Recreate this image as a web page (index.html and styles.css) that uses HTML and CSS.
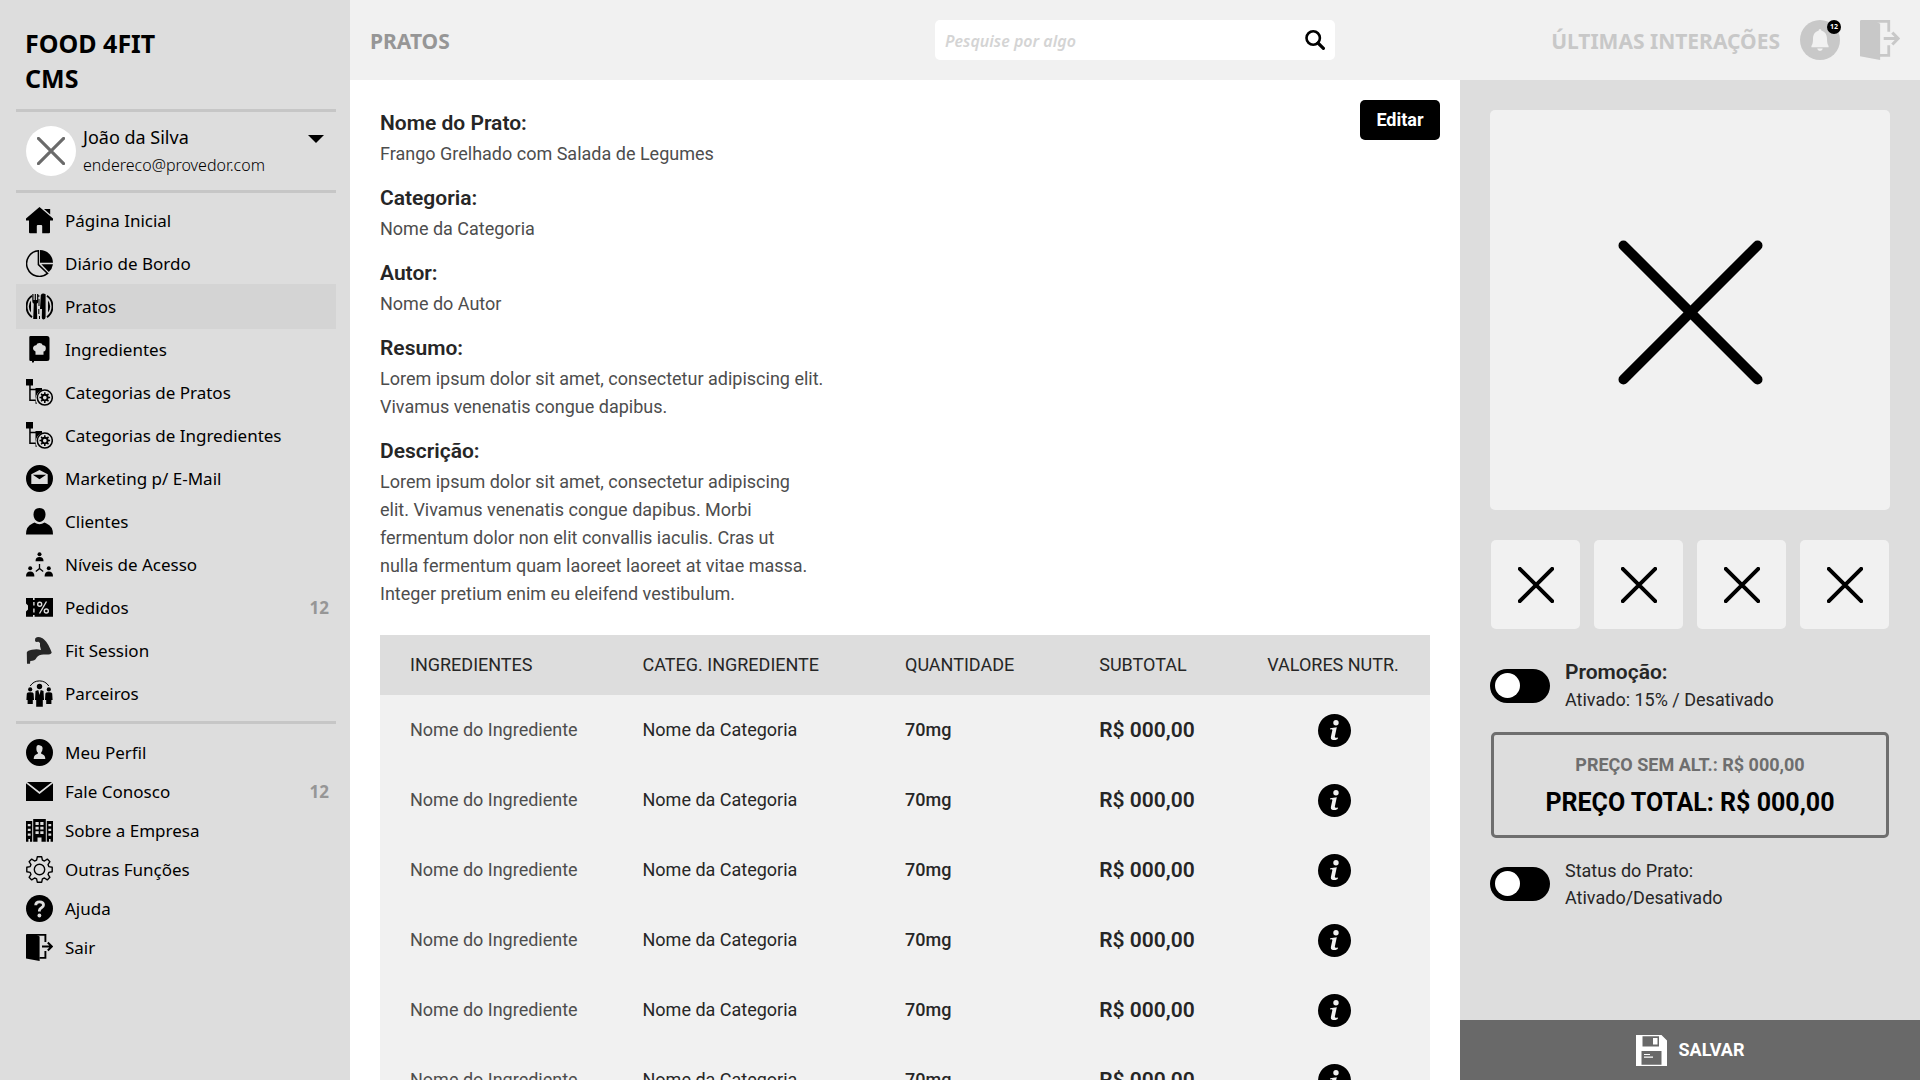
FILE: index.html
```html
<!DOCTYPE html>
<html lang="pt-BR">
<head>
<meta charset="utf-8">
<meta name="viewport" content="width=device-width, initial-scale=1">
<title>Food 4Fit CMS - Pratos</title>
<link rel="stylesheet" href="styles.css">
</head>
<body>
<svg class="sprite" aria-hidden="true">
  <symbol id="home" viewBox="0 0 27 27"><path d="M13.5 0 27 11.6V13.6H24V25.2Q24 26.2 23 26.2H16.2V19Q16.2 18 15.2 18H11.8Q10.8 18 10.8 19V26.2H4Q3 26.2 3 25.2V13.6H0V11.6Z"/><path d="M18 2H24.2V7.4Z"/></symbol>
  <symbol id="pie" viewBox="0 0 27 27"><path d="M14 0A13 13 0 0 1 27 12.8H14Z"/><path d="M15.400 14.200H27A13 13 0 0 1 22.800 22Z"/><path d="M12.400.8A12.800 12.800 0 1 0 21.600 23.400L12.400 14.600Z" fill="none" stroke="currentColor" stroke-width="1.500"/></symbol>
  <symbol id="plate" viewBox="0 0 27 27"><path d="M6 2.8A13.2 13.2 0 0 0 6 24.2M21 2.8A13.2 13.2 0 0 1 21 24.2" fill="none" stroke="currentColor" stroke-width="1.8"/><path d="M5 7.5A9.4 9.4 0 0 0 5 19.5ZM22 7.5A9.4 9.4 0 0 1 22 19.5Z"/><path d="M6.3 1H7.5V7H8.7V1H9.9V7H11.1V1H12.3V8.2Q12.3 10 10.8 10.8L11.2 26H7.2L7.8 10.8Q6.3 10 6.3 8.2ZM14.8 2Q16.500-.5 19.6 1.2V24Q19.6 26.4 17.6 26.4T15.8 24L16 16H14Z"/><path d="M12.8 2V4M13 6V13M12.8 16V21M13.5 23V26" stroke="currentColor" stroke-width="1"/></symbol>
  <symbol id="book" viewBox="0 0 27 27"><path fill-rule="evenodd" d="M4.500 0H21Q23.500 0 23.500 2.500V22.500Q23.500 25 21 25H8V26.800L7 26 6 27V25H4.500Q3.300 25 3.300 23.800V1.200Q3.300 0 4.500 0ZM9.500 18.800H17.500V15.600Q20 15 19.800 12T16.800 9.200Q16 7 13.500 7T10.200 9.200Q7 9.600 7 12.300T9.500 15.600Z"/></symbol>
  <symbol id="tree" viewBox="0 0 27 27"><path d="M0 0H7V6.600H0ZM9.500 9H16V11A9.600 9.600 0 0 0 11 24.800H9.500V22H3.200V6H4.700V9.800H9.500V11.300H4.700V20.500H9.500Z"/><circle cx="18.800" cy="18.600" r="7.500" fill="none" stroke="currentColor" stroke-width="1.500"/><circle cx="18.800" cy="18.600" r="2.800" fill="none" stroke="currentColor" stroke-width="1.900"/><path d="M18.800 13.300V16M18.800 21.200V23.900M13.500 18.600H16M21.600 18.600H24.100M15.100 14.900 17 16.800M20.600 20.400 22.500 22.300M15.100 22.300 17 20.400M20.600 16.800 22.500 14.900" stroke="currentColor" stroke-width="1.500"/></symbol>
  <symbol id="mail-circle" viewBox="0 0 27 27"><path fill-rule="evenodd" d="M13.500 0A13.500 13.500 0 1 1 13.500 27A13.500 13.500 0 1 1 13.500 0ZM5.300 9.200V18.900H21.700V9.200L13.500 5ZM6.800 9.800H20.200L13.500 14.200Z"/></symbol>
  <symbol id="user" viewBox="0 0 27 27"><path d="M13.500 0C17.500 0 19.500 2.800 19.500 6.500S17 14 13.500 14 7.500 10.200 7.500 6.500 9.500 0 13.500 0Z"/><path d="M0 26.400Q0 18 6.500 15.400L8.500 14.600Q13.500 18 18.500 14.600L20.500 15.400Q27 18 27 26.400Z"/></symbol>
  <symbol id="levels" viewBox="0 0 27 27"><circle cx="13.500" cy="3.200" r="2"/><path d="M9.500 10.200Q9.500 6 13.500 6T17.500 10.200Z"/><circle cx="4.200" cy="17.300" r="2"/><path d="M0 25.400Q0 20.500 4.200 20.500T8.400 25.400Z"/><circle cx="22.800" cy="17.300" r="2"/><path d="M18.600 25.400Q18.600 20.500 22.800 20.500T27 25.400Z"/><path d="M13.500 13V17.600L9.800 20.400M13.500 17.600 17.200 20.400" fill="none" stroke="currentColor" stroke-width="1.300"/></symbol>
  <symbol id="ticket" viewBox="0 0 27 27"><path fill-rule="evenodd" d="M0 4H7V6H8.600V4H27V22.800H8.600V21H7V22.800H0V17.500L2 15.500V11.500L0 9.500ZM7.200 8V11.500H8.600V8ZM7.200 14.500V18.500H8.600V14.500Z"/><g fill="none" stroke="#ddd" stroke-width="1.400"><circle cx="13.700" cy="10.200" r="2"/><circle cx="20.300" cy="17" r="2"/><path d="M20.500 7.500 13.500 19.500"/></g></symbol>
  <symbol id="arm" viewBox="0 0 27 27"><path fill="#262626" d="M9.200 1.500Q10 0 12 0T16.500 1.200C20 3.500 23 8 25.700 15.400Q25 18 18 17.500Q13 17.300 10.500 20.800Q9 24 4.300 24L4 26.800H1L.8 15.500Q1.500 13.500 6 12.800Q11 11.500 15 13Q13.500 9 14 6L12.500 4.800 9.800 5Q8.500 3.500 9.200 1.500Z"/></symbol>
  <symbol id="partners" viewBox="0 0 27 27"><path d="M4.200 6Q7.500 .9 13.500 .9T22.800 6" fill="none" stroke="currentColor" stroke-width="1"/><circle cx="13.500" cy="6.500" r="2.700"/><circle cx="4.200" cy="9.400" r="2.100"/><circle cx="22.800" cy="9.400" r="2.100"/><path fill-rule="evenodd" d="M9.500 11 12.300 10 13.500 15 14.700 10 17.500 11 18 20H16.800V26.800H10.200V20H9ZM.8 13.500Q1 12.300 4.200 12.300T7.600 13.500L8 20H6.800V24H1.600V20H.4ZM19.400 13.500Q19.600 12.300 22.800 12.300T26.200 13.500L26.600 20H25.400V24H20.200V20H19Z"/></symbol>
  <symbol id="profile" viewBox="0 0 27 27"><path fill-rule="evenodd" d="M13.500 0A13.500 13.500 0 1 1 13.500 27A13.500 13.500 0 1 1 13.500 0ZM7.700 19.900H19.300Q19.300 15.800 15.200 14.800V13.300Q16.600 11.800 16.600 9.300T13.500 6.200 10.400 9.300 11.800 13.300V14.800Q7.700 15.800 7.700 19.900Z"/></symbol>
  <symbol id="envelope" viewBox="0 0 27 27"><path d="M1 4H26L13.500 13.800ZM0 5.200 13.500 16 27 5.200V23H0Z"/></symbol>
  <symbol id="company" viewBox="0 0 27 27"><path fill-rule="evenodd" d="M0 4H6.200V24.800H4V22H2.400V24.800H0ZM1.800 7V9.200H4.600V7ZM1.800 11.800V14H4.600V11.800ZM1.800 16.500V18.700H4.600V16.500ZM7.200 2H19.800V24.800H15.500V20.500H11.500V24.800H7.200ZM9.500 5V8H12.700V5ZM14.300 5V8H17.500V5ZM9.500 9.800V12.500H12.700V9.800ZM14.300 9.800V12.500H17.500V9.800ZM9.500 14.300V17H12.700V14.300ZM14.300 14.300V17H17.500V14.300ZM20.800 4H27V24.800H24.600V22H23V24.800H20.800ZM22.400 7V9.200H25.200V7ZM22.400 11.800V14H25.200V11.800ZM22.400 16.500V18.700H25.200V16.500Z"/></symbol>
  <symbol id="gear" viewBox="0 0 27 27"><g fill="none" stroke="currentColor" stroke-width="1.400"><circle cx="13.500" cy="13.500" r="5.200"/><path stroke-linejoin="round" d="M11.300.8H15.700L16.400 4.200 18.400 5 21.300 3.100 23.900 5.700 22 8.600 22.800 10.600 26.200 11.300V15.700L22.800 16.400 22 18.400 23.900 21.300 21.300 23.900 18.400 22 16.400 22.800 15.700 26.200H11.300L10.600 22.800 8.600 22 5.700 23.900 3.100 21.300 5 18.400 4.200 16.400.8 15.700V11.300L4.200 10.600 5 8.600 3.100 5.700 5.700 3.100 8.600 5 10.600 4.200Z"/></g></symbol>
  <symbol id="help" viewBox="0 0 27 27"><circle cx="13.500" cy="13.500" r="13.500"/><path d="M9.700 10.200Q9.700 6.800 13.600 6.800T17.500 10Q17.500 11.700 15.500 12.800T13.400 15.300V16.600" fill="none" stroke="#ddd" stroke-width="2.800"/><circle cx="13.400" cy="20.500" r="1.900" fill="#ddd"/></symbol>
  <symbol id="exit" viewBox="0 0 27 27"><path d="M.5 0H8.500L13.600 2.500V27L0 24.500V.5Z"/><path d="M8 .9H19.400V8M19.400 17V23.900H13.500" fill="none" stroke="currentColor" stroke-width="1.900"/><path d="M16 12.500H25.500M21.800 8.500 25.800 12.500 21.800 16.500" fill="none" stroke="currentColor" stroke-width="2"/></symbol>
  <symbol id="cross" viewBox="0 0 36 36"><path d="M1.800 1.800 34.200 34.200M34.200 1.800 1.800 34.200" fill="none" stroke="currentColor" stroke-linecap="round"/></symbol>
  <symbol id="search" viewBox="0 0 20 20"><circle cx="8.200" cy="8" r="6.700" fill="none" stroke="currentColor" stroke-width="2.600"/><path d="M13 13 18.400 18.300" stroke="currentColor" stroke-width="3.200" stroke-linecap="round"/></symbol>
  <symbol id="bell" viewBox="0 0 40 40"><circle cx="20" cy="20" r="20"/><path fill="#f1f1f1" d="M20 9Q21.300 9 21.500 10.800C25.500 12 27 15 27 19Q27 24 28.600 26V27.200H11.400V26Q13 24 13 19C13 15 14.500 12 18.500 10.800Q18.700 9 20 9ZM17.200 28.600H22.800Q22.500 31 20 31T17.200 28.600Z"/></symbol>
  <symbol id="info" viewBox="0 0 33 33"><circle cx="16.500" cy="16.500" r="16.500"/><circle cx="18" cy="8.700" r="2.700" fill="#f1f1f1"/><path fill="#f1f1f1" d="M12.200 14.200 18.800 13.200 16.800 22.800Q16.700 24.500 20 23.500L19.700 24.900Q17 26.400 14.800 26Q12.300 25.500 13 22.500L14.400 16Q14.300 15 12 15.400Z"/></symbol>
  <symbol id="disk" viewBox="0 0 31 31"><path fill-rule="evenodd" d="M0 0H25.500L31 5.500V31H0ZM6.500 1.200V11.500H23V1.200ZM5.500 16V29.800H25.500V16Z"/><path d="M17 3H21.500V9.500H17ZM8 19H14V20H8ZM8 21.500H17V22.800H8Z"/></symbol>
</svg>
<div class="app">
  <aside class="sidebar">
    <h1 class="brand">FOOD 4FIT<br>CMS</h1>
    <hr class="rule">
    <div class="account">
      <span class="avatar"><svg class="avatar-mark"><use href="#cross"/></svg></span>
      <div class="account-text">
        <p class="account-name">João da Silva</p>
        <p class="account-mail">endereco@provedor.com</p>
      </div>
      <button class="caret" type="button" aria-label="Abrir menu da conta"><svg viewBox="0 0 16 8"><path d="M0 0H16L8 8Z"/></svg></button>
    </div>
    <hr class="rule">
    <nav>
      <ul class="menu">
        <li><a class="item" href="#"><svg class="icon"><use href="#home"/></svg>Página Inicial</a></li>
        <li><a class="item" href="#"><svg class="icon"><use href="#pie"/></svg>Diário de Bordo</a></li>
        <li><a class="item item-active" href="#" aria-current="page"><svg class="icon"><use href="#plate"/></svg>Pratos</a></li>
        <li><a class="item" href="#"><svg class="icon"><use href="#book"/></svg>Ingredientes</a></li>
        <li><a class="item" href="#"><svg class="icon"><use href="#tree"/></svg>Categorias de Pratos</a></li>
        <li><a class="item" href="#"><svg class="icon"><use href="#tree"/></svg>Categorias de Ingredientes</a></li>
        <li><a class="item" href="#"><svg class="icon"><use href="#mail-circle"/></svg>Marketing p/ E-Mail</a></li>
        <li><a class="item" href="#"><svg class="icon"><use href="#user"/></svg>Clientes</a></li>
        <li><a class="item" href="#"><svg class="icon"><use href="#levels"/></svg>Níveis de Acesso</a></li>
        <li><a class="item" href="#"><svg class="icon"><use href="#ticket"/></svg>Pedidos<span class="count">12</span></a></li>
        <li><a class="item" href="#"><svg class="icon"><use href="#arm"/></svg>Fit Session</a></li>
        <li><a class="item" href="#"><svg class="icon"><use href="#partners"/></svg>Parceiros</a></li>
      </ul>
      <hr class="rule">
      <ul class="menu menu-compact">
        <li><a class="item" href="#"><svg class="icon"><use href="#profile"/></svg>Meu Perfil</a></li>
        <li><a class="item" href="#"><svg class="icon"><use href="#envelope"/></svg>Fale Conosco<span class="count">12</span></a></li>
        <li><a class="item" href="#"><svg class="icon"><use href="#company"/></svg>Sobre a Empresa</a></li>
        <li><a class="item" href="#"><svg class="icon"><use href="#gear"/></svg>Outras Funções</a></li>
        <li><a class="item" href="#"><svg class="icon"><use href="#help"/></svg>Ajuda</a></li>
        <li><a class="item" href="#"><svg class="icon"><use href="#exit"/></svg>Sair</a></li>
      </ul>
    </nav>
  </aside>

  <header class="topbar">
    <h2 class="page-title">PRATOS</h2>
    <form class="search" role="search">
      <input class="search-input" type="search" placeholder="Pesquise por algo" aria-label="Pesquisar">
      <button class="search-button" type="button" aria-label="Buscar"><svg><use href="#search"/></svg></button>
    </form>
    <div class="actions">
      <span class="actions-title">ÚLTIMAS INTERAÇÕES</span>
      <button class="action" type="button" aria-label="Notificações"><svg><use href="#bell"/></svg><span class="badge">12</span></button>
      <button class="action" type="button" aria-label="Sair"><svg><use href="#exit"/></svg></button>
    </div>
  </header>

  <main class="content">
    <div class="details">
      <dl class="fields">
        <div class="field"><dt>Nome do Prato:</dt><dd>Frango Grelhado com Salada de Legumes</dd></div>
        <div class="field"><dt>Categoria:</dt><dd>Nome da Categoria</dd></div>
        <div class="field"><dt>Autor:</dt><dd>Nome do Autor</dd></div>
        <div class="field"><dt>Resumo:</dt><dd>Lorem ipsum dolor sit amet, consectetur adipiscing elit. Vivamus venenatis congue dapibus.</dd></div>
        <div class="field field-narrow"><dt>Descrição:</dt><dd>Lorem ipsum dolor sit amet, consectetur adipiscing elit. Vivamus venenatis congue dapibus. Morbi fermentum dolor non elit convallis iaculis. Cras ut nulla fermentum quam laoreet laoreet at vitae massa. Integer pretium enim eu eleifend vestibulum.</dd></div>
      </dl>
      <button class="edit" type="button">Editar</button>
    </div>
    <table class="ingredients">
      <colgroup><col class="col-name"><col class="col-category"><col class="col-amount"><col class="col-subtotal"><col class="col-info"></colgroup>
      <thead>
        <tr><th>INGREDIENTES</th><th>CATEG. INGREDIENTE</th><th>QUANTIDADE</th><th>SUBTOTAL</th><th>VALORES NUTR.</th></tr>
      </thead>
      <tbody>
        <tr><td class="name">Nome do Ingrediente</td><td>Nome da Categoria</td><td class="amount">70mg</td><td class="price">R$ 000,00</td><td><button class="info" type="button" aria-label="Valores nutricionais"><svg><use href="#info"/></svg></button></td></tr>
        <tr><td class="name">Nome do Ingrediente</td><td>Nome da Categoria</td><td class="amount">70mg</td><td class="price">R$ 000,00</td><td><button class="info" type="button" aria-label="Valores nutricionais"><svg><use href="#info"/></svg></button></td></tr>
        <tr><td class="name">Nome do Ingrediente</td><td>Nome da Categoria</td><td class="amount">70mg</td><td class="price">R$ 000,00</td><td><button class="info" type="button" aria-label="Valores nutricionais"><svg><use href="#info"/></svg></button></td></tr>
        <tr><td class="name">Nome do Ingrediente</td><td>Nome da Categoria</td><td class="amount">70mg</td><td class="price">R$ 000,00</td><td><button class="info" type="button" aria-label="Valores nutricionais"><svg><use href="#info"/></svg></button></td></tr>
        <tr><td class="name">Nome do Ingrediente</td><td>Nome da Categoria</td><td class="amount">70mg</td><td class="price">R$ 000,00</td><td><button class="info" type="button" aria-label="Valores nutricionais"><svg><use href="#info"/></svg></button></td></tr>
        <tr><td class="name">Nome do Ingrediente</td><td>Nome da Categoria</td><td class="amount">70mg</td><td class="price">R$ 000,00</td><td><button class="info" type="button" aria-label="Valores nutricionais"><svg><use href="#info"/></svg></button></td></tr>
      </tbody>
    </table>
  </main>

  <aside class="panel">
    <div class="panel-body">
      <div class="photo"><svg class="photo-mark"><use href="#cross"/></svg></div>
      <div class="thumbs">
        <button class="thumb" type="button" aria-label="Imagem 1"><svg><use href="#cross"/></svg></button>
        <button class="thumb" type="button" aria-label="Imagem 2"><svg><use href="#cross"/></svg></button>
        <button class="thumb" type="button" aria-label="Imagem 3"><svg><use href="#cross"/></svg></button>
        <button class="thumb" type="button" aria-label="Imagem 4"><svg><use href="#cross"/></svg></button>
      </div>
      <div class="option">
        <input class="toggle" type="checkbox" role="switch" id="promo">
        <label for="promo"><strong class="option-title">Promoção:</strong>Ativado: 15% / Desativado</label>
      </div>
      <div class="prices">
        <p class="price-before">PREÇO SEM ALT.: R$ 000,00</p>
        <p class="price-total">PREÇO TOTAL: R$ 000,00</p>
      </div>
      <div class="option">
        <input class="toggle" type="checkbox" role="switch" id="status">
        <label for="status">Status do Prato:<br>Ativado/Desativado</label>
      </div>
    </div>
    <button class="save" type="button"><svg><use href="#disk"/></svg>SALVAR</button>
  </aside>
</div>
</body>
</html>
```
FILE: styles.css
```css
*,
*::before {
  box-sizing: border-box;
}

body,
h1,
h2,
p,
dl,
dd,
ul {
  margin: 0;
  padding: 0;
}

body {
  font-family: Roboto, "Liberation Sans", sans-serif;
  font-size: 18px;
  line-height: 28px;
  color: #262626;
}

button {
  border: 0;
  padding: 0;
  background: none;
  font: inherit;
  color: inherit;
  cursor: pointer;
}

svg {
  display: block;
  fill: currentColor;
}

.sprite {
  display: none;
}

.app {
  display: grid;
  grid-template: 80px minmax(0, 1fr) / 350px minmax(0, 1fr) 460px;
  grid-template-areas: "side top top" "side main panel";
  height: 100vh;
}

/* Sidebar */
.sidebar {
  grid-area: side;
  padding: 26px 14px 0 16px;
  background: #ddd;
  color: #000;
  font-family: "Segoe UI", "Noto Sans", sans-serif;
  overflow: hidden;
}

.brand {
  padding: 0 0 13px 9px;
  font-size: 25px;
  line-height: 35px;
}

.rule {
  height: 3px;
  margin: 0;
  border: 0;
  background: #c6c6c6;
}

.account {
  display: flex;
  align-items: center;
  height: 78px;
  padding: 0 12px 0 10px;
}

.avatar {
  display: grid;
  place-items: center;
  width: 50px;
  height: 50px;
  border-radius: 50%;
  background: #fff;
  color: #6a6a6a;
}

.avatar-mark {
  width: 28px;
  height: 28px;
  stroke-width: 4;
}

.account-text {
  flex: 1;
  padding-left: 7px;
}

.account-mail {
  font-size: 16px;
  font-weight: 300;
}

.caret {
  align-self: flex-start;
  margin-top: 23px;
}

.caret svg {
  width: 16px;
  height: 8px;
}

.menu {
  padding: 6px 0;
  list-style: none;
}

.item {
  display: flex;
  align-items: center;
  gap: 12px;
  height: 43px;
  padding: 0 7px 0 10px;
  color: inherit;
  font-size: 17px;
  text-decoration: none;
}

.item-active {
  height: 45px;
  margin: -1px 0;
  background: #d4d4d4;
}

.icon {
  width: 27px;
  height: 27px;
}

.count {
  margin-left: auto;
  color: #969696;
  font-weight: 700;
}

.menu-compact {
  padding-top: 9px;
}

.menu-compact .item {
  height: 39px;
}

/* Top bar */
.topbar {
  grid-area: top;
  display: grid;
  grid-template-columns: minmax(0, 1fr) 400px minmax(0, 1fr);
  align-items: center;
  background: #f1f1f1;
  font-family: "Segoe UI", "Noto Sans", sans-serif;
}

.page-title {
  padding: 2px 0 0 20px;
  color: #969696;
  font-size: 21px;
}

.search {
  display: flex;
  height: 40px;
  padding: 0 10px;
  border-radius: 5px;
  background: #fff;
}

.search-input {
  flex: 1;
  min-width: 0;
  padding: 2px 0 0;
  border: 0;
  outline: 0;
  background: none;
  font: italic 600 16px "Segoe UI", "Noto Sans", sans-serif;
}

.search-input::placeholder {
  color: #d4d4d4;
}

.search-button {
  color: #000;
}

.search-button svg {
  width: 20px;
  height: 20px;
}

.actions {
  display: flex;
  align-items: center;
  justify-content: flex-end;
  gap: 20px;
  padding-right: 20px;
  color: #c8c8c8;
}

.actions-title {
  padding-top: 2px;
  font-size: 21px;
  font-weight: 700;
  white-space: nowrap;
}

.action {
  position: relative;
}

.action svg {
  width: 40px;
  height: 40px;
}

.badge {
  position: absolute;
  top: 0;
  right: -1px;
  width: 14px;
  height: 14px;
  border-radius: 50%;
  background: #000;
  color: #fff;
  font-size: 7px;
  font-weight: 700;
  line-height: 14px;
}

/* Dish details */
.content {
  grid-area: main;
  padding: 20px 30px 0;
  background: #fff;
  overflow-y: auto;
  scrollbar-width: none;
}

.details {
  display: flex;
  align-items: flex-start;
  justify-content: space-between;
}

.fields {
  display: flex;
  flex-direction: column;
  gap: 15px;
  padding: 8px 0 27px;
}

.field {
  max-width: 460px;
}

.field-narrow {
  max-width: 434px;
}

.field dt {
  padding-bottom: 2px;
  font-size: 21px;
  font-weight: 600;
  line-height: 30px;
}

.field dd {
  color: #4d4d4d;
}

.edit {
  width: 80px;
  height: 40px;
  margin-right: -10px;
  border-radius: 5px;
  background: #000;
  color: #fff;
  font-weight: 700;
}

.ingredients {
  width: 100%;
  table-layout: fixed;
  border-collapse: collapse;
  background: #f1f1f1;
}

.col-name,
.col-category {
  width: 25%;
}

.col-amount {
  width: 18.5%;
}

.col-subtotal {
  width: 16%;
}

.ingredients th {
  height: 60px;
  padding: 0;
  background: #ddd;
  font-weight: 400;
  text-align: left;
  white-space: nowrap;
}

.ingredients td {
  height: 70px;
  padding: 0;
}

.ingredients th:first-child,
.ingredients td:first-child {
  padding-left: 30px;
}

.ingredients th:last-child,
.ingredients td:last-child {
  padding-right: 28px;
}

.ingredients .name {
  color: #4d4d4d;
}

.ingredients .amount {
  font-weight: 500;
}

.ingredients .price {
  font-size: 21px;
  font-weight: 600;
}

.info {
  display: block;
  margin: 0 auto;
  color: #000;
}

.info svg {
  width: 33px;
  height: 33px;
}

/* Side panel */
.panel {
  grid-area: panel;
  display: flex;
  flex-direction: column;
  background: #ddd;
  overflow: hidden;
}

.panel-body {
  flex: 1;
  min-height: 0;
  padding: 30px 30px 0;
}

.photo {
  display: grid;
  place-items: center;
  aspect-ratio: 1;
  padding-top: 4px;
  border-radius: 5px;
  background: #f1f1f1;
  color: #000;
}

.photo-mark {
  width: 149px;
  height: 149px;
  stroke-width: 2.4;
}

.thumbs {
  display: grid;
  grid-template-columns: repeat(4, 1fr);
  gap: 14px;
  padding: 30px 1px;
}

.thumb {
  display: grid;
  place-items: center;
  aspect-ratio: 1;
  border-radius: 5px;
  background: #f1f1f1;
  color: #000;
}

.thumb svg {
  width: 36px;
  height: 36px;
  stroke-width: 4;
}

.option {
  display: flex;
  align-items: center;
  gap: 15px;
  line-height: 27px;
}

.option-title {
  display: block;
  font-size: 21px;
  font-weight: 600;
}

.toggle {
  appearance: none;
  width: 60px;
  height: 34px;
  margin: 0;
  padding: 4px 5px;
  border-radius: 17px;
  background: #000;
}

.toggle::before {
  content: "";
  display: block;
  width: 25px;
  height: 25px;
  border-radius: 50%;
  background: #fff;
}

.toggle:checked::before {
  margin-left: auto;
}

.prices {
  margin: 19px 1px;
  padding: 16px 0 14px;
  border: 3px solid #6e6e6e;
  border-radius: 5px;
  text-align: center;
  font-weight: 700;
}

.price-before {
  padding-bottom: 6px;
  color: #6e6e6e;
}

.price-total {
  color: #000;
  font-size: 25px;
  line-height: 36px;
}

.save {
  display: flex;
  align-items: center;
  justify-content: center;
  gap: 12px;
  height: 60px;
  background: #696969;
  color: #fff;
  font-weight: 700;
}

.save svg {
  width: 31px;
  height: 31px;
}
```
